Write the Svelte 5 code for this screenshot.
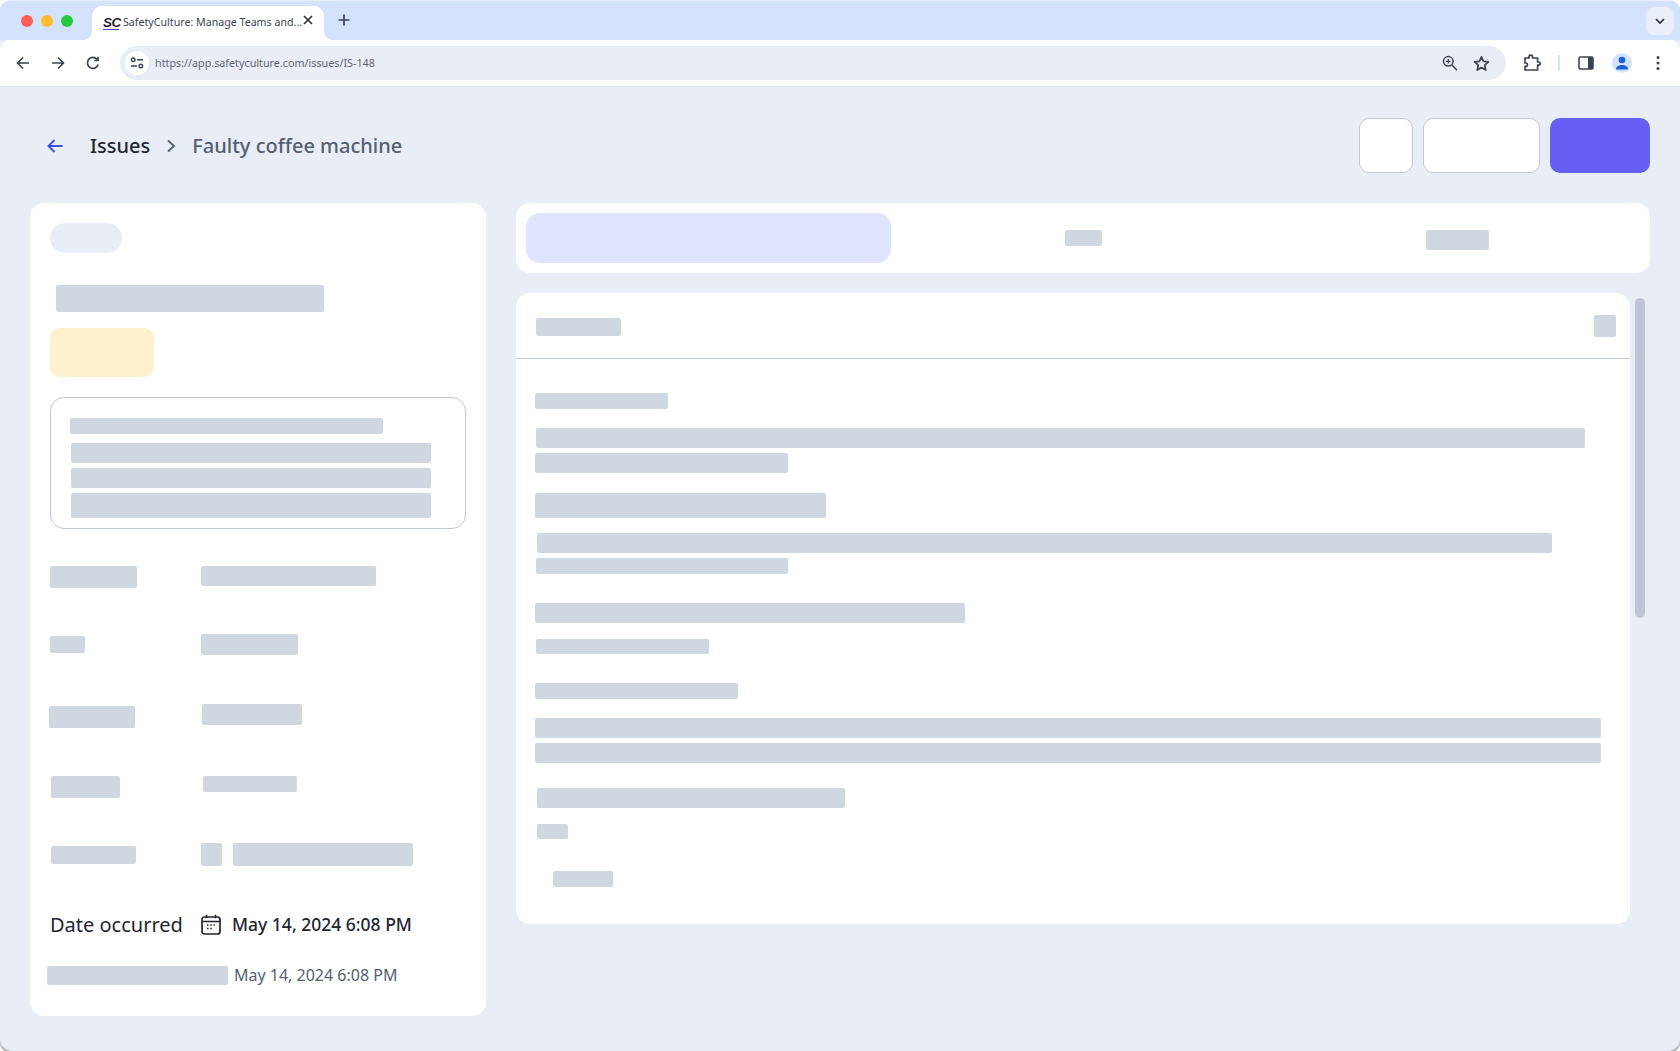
<script>
  // skeleton placeholders: x = left offset, w/h = size, gap = space above
  const boxBars = [
    { x: 19, w: 313, h: 16, gap: 0 },
    { x: 20, w: 360, h: 20, gap: 9 },
    { x: 20, w: 360, h: 20, gap: 5 },
    { x: 20, w: 360, h: 25, gap: 5 }
  ];

  // label and value bars of the five detail rows; the value column starts near x=151
  const fields = [
    { lx: 0, lw: 87, lh: 22, ltop: 3, rx: 151, rw: 175, rh: 20, rtop: 3 },
    { lx: 0, lw: 35, lh: 17, ltop: 3, rx: 151, rw: 97, rh: 21, rtop: 1 },
    { lx: -1, lw: 86, lh: 22, ltop: 3, rx: 152, rw: 100, rh: 21, rtop: 1 },
    { lx: 1, lw: 69, lh: 22, ltop: 3, rx: 153, rw: 94, rh: 16, rtop: 3 },
    { lx: 1, lw: 85, lh: 18, ltop: 3, rx: 151, rw: 21, rh: 23, rtop: 0, extra: 180 }
  ];

  const bodyBars = [
    { x: 19, w: 133, h: 16, gap: 34 },
    { x: 20, w: 1049, h: 20, gap: 19 },
    { x: 19, w: 253, h: 20, gap: 5 },
    { x: 19, w: 291, h: 25, gap: 20 },
    { x: 21, w: 1015, h: 20, gap: 15 },
    { x: 20, w: 252, h: 16, gap: 5 },
    { x: 19, w: 430, h: 20, gap: 29 },
    { x: 20, w: 173, h: 15, gap: 16 },
    { x: 19, w: 203, h: 16, gap: 29 },
    { x: 19, w: 1066, h: 20, gap: 19 },
    { x: 19, w: 1066, h: 20, gap: 5 },
    { x: 21, w: 308, h: 20, gap: 25 },
    { x: 21, w: 31, h: 15, gap: 16 },
    { x: 37, w: 60, h: 16, gap: 32 }
  ];
</script>

{#snippet bars(list)}
  {#each list as b}
    <div class="skel" style="width:{b.w}px;height:{b.h}px;margin:{b.gap}px 0 0 {b.x}px"></div>
  {/each}
{/snippet}

<div class="window">
  <div class="tabstrip">
    <div class="lights">
      <span class="light red"></span>
      <span class="light yellow"></span>
      <span class="light green"></span>
    </div>
    <div class="tab">
      <span class="favicon">SC</span>
      <span class="tab-title">SafetyCulture: Manage Teams and...</span>
      <svg class="tab-close" width="12" height="12" viewBox="0 0 12 12"><path d="M2 2l8 8M10 2l-8 8" stroke="#2a2f3a" stroke-width="1.7" fill="none"/></svg>
    </div>
    <svg class="new-tab" width="14" height="14" viewBox="0 0 14 14"><path d="M7 1.5v11M1.5 7h11" stroke="#3c4350" stroke-width="1.7" fill="none"/></svg>
    <div class="tab-menu">
      <svg width="12" height="12" viewBox="0 0 12 12"><path d="M2 4l4 4 4-4" stroke="#2a2f3a" stroke-width="1.6" fill="none"/></svg>
    </div>
  </div>

  <div class="toolbar">
    <div class="nav">
      <svg width="16" height="16" viewBox="0 0 16 16"><path d="M14 8H2.500M8 2.500L2.500 8 8 13.500" stroke="#3c4350" stroke-width="1.700" fill="none"/></svg>
      <svg width="16" height="16" viewBox="0 0 16 16"><path d="M2 8h11.500M8 2.500L13.500 8 8 13.500" stroke="#3c4350" stroke-width="1.700" fill="none"/></svg>
      <svg width="16" height="16" viewBox="0 0 16 16"><path d="M13.200 9.500A5.500 5.500 0 1 1 12 4.200M13 1.800v3.700H9.300" stroke="#3c4350" stroke-width="1.700" fill="none"/></svg>
    </div>
    <div class="omnibox">
      <span class="site-info">
        <svg width="14" height="12" viewBox="0 0 14 12"><circle cx="3.200" cy="2.800" r="1.800" stroke="#3c4350" stroke-width="1.400" fill="none"/><path d="M7 2.800h6M1 9h6" stroke="#3c4350" stroke-width="1.600"/><circle cx="10.800" cy="9" r="1.800" stroke="#3c4350" stroke-width="1.400" fill="none"/></svg>
      </span>
      <span class="url">https://app.safetyculture.com/issues/IS-148</span>
      <svg class="zoom-icon" width="16" height="16" viewBox="0 0 16 16"><circle cx="6.300" cy="6.300" r="4.800" stroke="#3c4350" stroke-width="1.500" fill="none"/><path d="M10 10l5 5.200" stroke="#3c4350" stroke-width="1.600"/><path d="M6.300 4v4.600M4 6.300h4.600" stroke="#3c4350" stroke-width="1.300"/></svg>
      <svg class="star-icon" width="17" height="17" viewBox="0 0 17 17"><path d="M8.500 1.800l2 4.600 5 .5-3.800 3.300 1.100 4.900-4.300-2.600-4.300 2.600 1.100-4.900L1.500 6.900l5-.5z" stroke="#3c4350" stroke-width="1.700" fill="none" stroke-linejoin="round"/></svg>
    </div>
    <svg class="puzzle" width="18" height="18" viewBox="0 0 18 18"><path d="M2 4h4V3a1.800 1.800 0 0 1 3.600 0v1h5v4h1a1.600 1.600 0 0 1 0 3.200h-1V16H2v-3.600h.8a1.700 1.700 0 0 0 0-3.400H2z" stroke="#3c4350" stroke-width="1.700" fill="none" stroke-linejoin="round"/></svg>
    <span class="sep"></span>
    <svg class="panel-icon" width="16" height="14" viewBox="0 0 16 14"><rect x="1" y="1" width="14" height="12" rx="1.500" stroke="#3c4350" stroke-width="1.600" fill="none"/><rect x="10" y="1" width="5" height="12" fill="#3c4350"/></svg>
    <span class="avatar">
      <svg width="16" height="16" viewBox="0 0 16 16"><circle cx="8" cy="5" r="3.300" fill="#1f5fd6"/><path d="M2 14.500c0-3 2.500-4.500 6-4.500s6 1.500 6 4.500z" fill="#1f5fd6"/></svg>
    </span>
    <svg class="dots" width="4" height="16" viewBox="0 0 4 16"><circle cx="2" cy="2.500" r="1.500" fill="#3c4350"/><circle cx="2" cy="8" r="1.500" fill="#3c4350"/><circle cx="2" cy="13.500" r="1.500" fill="#3c4350"/></svg>
  </div>

  <main class="page">
    <div class="topbar">
      <svg class="back" width="16" height="16" viewBox="0 0 16 16"><path d="M15.500 8H1.500M7.500 2L1.500 8l6 6" stroke="#3b50e0" stroke-width="1.900" fill="none"/></svg>
      <span class="crumb-root">Issues</span>
      <svg class="crumb-sep" width="10" height="14" viewBox="0 0 10 14"><path d="M2 1.500L8 7l-6 5.500" stroke="#545f70" stroke-width="1.800" fill="none"/></svg>
      <span class="crumb-current">Faulty coffee machine</span>
      <div class="actions">
        <div class="btn small"></div>
        <div class="btn medium"></div>
        <div class="btn primary"></div>
      </div>
    </div>

    <div class="columns">
      <aside class="details">
        <div class="pill"></div>
        <div class="skel title"></div>
        <div class="status"></div>
        <div class="desc">
          {@render bars(boxBars)}
        </div>
        <div class="fields">
          {#each fields as f}
            <div class="field">
              <div class="skel" style="width:{f.lw}px;height:{f.lh}px;margin:{f.ltop}px {f.rx - f.lx - f.lw}px 0 {f.lx}px"></div>
              <div class="skel" style="width:{f.rw}px;height:{f.rh}px;margin-top:{f.rtop}px"></div>
              {#if f.extra}
                <div class="skel" style="width:{f.extra}px;height:{f.rh}px;margin-left:11px"></div>
              {/if}
            </div>
          {/each}
        </div>
        <div class="occurred">
          <span class="occurred-label">Date occurred</span>
          <svg class="calendar" width="20" height="21" viewBox="0 0 20 21"><rect x="1" y="3" width="18" height="17" rx="2.500" stroke="#1f2533" stroke-width="1.700" fill="none"/><path d="M1 7.500h18M5.500 .8v3.500M14.500 .8v3.500" stroke="#1f2533" stroke-width="1.700" fill="none"/><path d="M6 11h1.500M9.300 11h1.500M12.600 11h1.500M6 14.500h1.500M9.300 14.500h1.500" stroke="#1f2533" stroke-width="1.500"/></svg>
          <span class="occurred-value">May 14, 2024 6:08 PM</span>
        </div>
        <div class="created">
          <div class="skel created-bar"></div>
          <span class="created-value">May 14, 2024 6:08 PM</span>
        </div>
      </aside>

      <section class="main">
        <div class="tabs">
          <div class="tab-active"></div>
          <div class="skel tab-a"></div>
          <div class="skel tab-b"></div>
        </div>
        <div class="content">
          <div class="panel">
            <div class="panel-head">
              <div class="skel head-title"></div>
              <div class="skel head-icon"></div>
            </div>
            {@render bars(bodyBars)}
          </div>
          <div class="track"><div class="thumb"></div></div>
        </div>
      </section>
    </div>
  </main>
</div>

<style>
  :global(body) {
    background: #fff;
    font-family: "Noto Sans", sans-serif;
  }

  .window {
    height: 1051px;
    display: flex;
    flex-direction: column;
    background: #e8edf6;
    border-radius: 12px;
    overflow: hidden;
    box-sizing: border-box;
    box-shadow: 0 2px 3px rgba(60, 60, 70, 0.6);
  }

  /* browser chrome */
  .tabstrip {
    height: 39px;
    margin-top: 1px;
    flex: none;
    display: flex;
    align-items: flex-end;
    background: #d3e3fd;
  }
  .lights {
    display: flex;
    gap: 8px;
    margin: 0 0 13px 21px;
    width: 71px;
    flex: none;
  }
  .light {
    width: 12px;
    height: 12px;
    border-radius: 50%;
  }
  .red { background: #ff5f57; }
  .yellow { background: #febc2e; }
  .green { background: #28c840; }

  .tab {
    position: relative;
    width: 232px;
    height: 34px;
    box-sizing: border-box;
    padding: 0 10px;
    display: flex;
    align-items: center;
    background: #fff;
    border-radius: 10px 10px 0 0;
    flex: none;
  }
  .tab::before,
  .tab::after {
    content: "";
    position: absolute;
    bottom: 0;
    width: 10px;
    height: 10px;
  }
  .tab::before {
    left: -10px;
    background: radial-gradient(circle at 0 0, #d3e3fd 10px, #fff 10.5px);
  }
  .tab::after {
    right: -10px;
    background: radial-gradient(circle at 100% 0, #d3e3fd 10px, #fff 10.5px);
  }
  .favicon {
    width: 16px;
    margin: 0 4px 0 1px;
    flex: none;
    font: italic 800 13.5px/13px "Liberation Sans", sans-serif;
    letter-spacing: -0.5px;
    color: #1f2533;
    border-bottom: 1px solid #3b50e0;
  }
  .tab-title {
    flex: 1;
    font-size: 10.65px;
    color: #3c4350;
    white-space: nowrap;
    margin-top: -3px;
  }
  .tab-close {
    margin: -7px 1px 0 0;
    flex: none;
  }
  .new-tab {
    margin: 0 0 13px 13px;
    flex: none;
  }
  .tab-menu {
    margin: 0 6px 5px auto;
    width: 28px;
    height: 28px;
    border-radius: 8px;
    background: #e9eef8;
    display: flex;
    align-items: center;
    justify-content: center;
  }

  .toolbar {
    height: 47px;
    flex: none;
    display: flex;
    align-items: center;
    background: #fff;
    border-radius: 10px 10px 0 0;
    box-sizing: border-box;
    border-bottom: 1px solid #dfe1e8;
  }
  .nav {
    display: flex;
    gap: 19px;
    margin-left: 15px;
    width: 105px;
    flex: none;
  }
  .omnibox {
    width: 1386px;
    height: 34px;
    flex: none;
    display: flex;
    align-items: center;
    background: #e9edf6;
    border-radius: 17px;
    box-sizing: border-box;
    padding: 0 16px 0 5px;
  }
  .site-info {
    width: 24px;
    height: 24px;
    border-radius: 50%;
    background: #fff;
    display: flex;
    align-items: center;
    justify-content: center;
    flex: none;
  }
  .url {
    flex: 1;
    margin-left: 6px;
    font-size: 10.75px;
    color: #5d6470;
  }
  .star-icon { margin-left: 15px; }
  .puzzle { margin-left: 17px; flex: none; }
  .sep {
    width: 2px;
    height: 16px;
    background: #d3e3fd;
    margin-left: 17px;
    flex: none;
  }
  .panel-icon { margin-left: 18px; flex: none; }
  .avatar {
    width: 20px;
    height: 20px;
    border-radius: 50%;
    background: #d3e3fd;
    display: flex;
    align-items: center;
    justify-content: center;
    margin-left: 18px;
    overflow: hidden;
    flex: none;
  }
  .dots { margin-left: 24px; flex: none; }

  /* page */
  .page {
    flex: 1;
    padding: 31px 30px 0;
  }
  .topbar {
    height: 55px;
    display: flex;
    align-items: center;
  }
  .back {
    margin-left: 17px;
    flex: none;
  }
  .crumb-root {
    margin-left: 27px;
    font-size: 20px;
    font-weight: 500;
    color: #1f2533;
  }
  .crumb-sep {
    margin-left: 16px;
  }
  .crumb-current {
    margin-left: 16px;
    font-size: 20px;
    font-weight: 500;
    color: #545f70;
  }
  .actions {
    margin-left: auto;
    display: flex;
    gap: 10px;
  }
  .btn {
    height: 55px;
    box-sizing: border-box;
    border: 1px solid #c3c8d6;
    border-radius: 10px;
    background: #fff;
  }
  .small { width: 54px; }
  .medium { width: 117px; }
  .primary {
    width: 100px;
    border: 0;
    background: #675ff3;
  }

  .columns {
    margin-top: 30px;
    display: flex;
    gap: 30px;
    align-items: flex-start;
  }

  .skel {
    background: #d0d7e1;
    border-radius: 2px;
    flex: none;
  }

  /* left card */
  .details {
    width: 456px;
    height: 813px;
    flex: none;
    box-sizing: border-box;
    padding: 20px;
    background: #fff;
    border-radius: 14px;
  }
  .pill {
    width: 72px;
    height: 30px;
    border-radius: 15px;
    background: #e8edf6;
  }
  .title {
    width: 268px;
    height: 27px;
    margin: 32px 0 0 6px;
  }
  .status {
    width: 104px;
    height: 49px;
    margin-top: 16px;
    border-radius: 10px;
    background: #fef1cd;
  }
  .desc {
    height: 132px;
    margin-top: 20px;
    box-sizing: border-box;
    padding-top: 20px;
    border: 1px solid #c3c8d6;
    border-radius: 14px;
  }
  .fields {
    margin-top: 34px;
  }
  .field {
    display: flex;
    align-items: flex-start;
    height: 70px;
  }
  .occurred {
    display: flex;
    align-items: center;
    height: 22px;
  }
  .occurred-label {
    width: 151px;
    font-size: 20px;
    color: #1f2533;
    flex: none;
  }
  .calendar { flex: none; }
  .occurred-value {
    margin-left: 11px;
    font-size: 17.5px;
    font-weight: 500;
    color: #1f2533;
  }
  .created {
    display: flex;
    align-items: center;
    margin-top: 31px;
    height: 19px;
  }
  .created-bar {
    width: 181px;
    height: 19px;
    margin-left: -3px;
  }
  .created-value {
    margin: -2px 0 0 6px;
    font-size: 16px;
    color: #545f70;
  }

  /* right column */
  .main {
    width: 1134px;
    flex: none;
  }
  .tabs {
    height: 70px;
    box-sizing: border-box;
    padding: 10px;
    display: flex;
    align-items: flex-start;
    background: #fff;
    border-radius: 14px;
  }
  .tab-active {
    width: 365px;
    height: 50px;
    flex: none;
    border-radius: 14px;
    background: #e0e4ff;
  }
  .tab-a {
    width: 37px;
    height: 16px;
    margin: 17px 0 0 174px;
  }
  .tab-b {
    width: 63px;
    height: 20px;
    margin: 17px 0 0 324px;
  }
  .content {
    margin-top: 20px;
    display: flex;
  }
  .panel {
    width: 1114px;
    height: 631px;
    flex: none;
    background: #fff;
    border-radius: 14px;
  }
  .panel-head {
    height: 66px;
    box-sizing: border-box;
    border-bottom: 1px solid #c3c8d6;
    display: flex;
    justify-content: space-between;
    align-items: flex-start;
    padding: 22px 14px 0 20px;
  }
  .head-title {
    width: 85px;
    height: 18px;
    margin-top: 3px;
  }
  .head-icon {
    width: 22px;
    height: 22px;
  }
  .track {
    width: 20px;
    padding: 5px;
    box-sizing: border-box;
  }
  .thumb {
    width: 10px;
    height: 320px;
    border-radius: 5px;
    background: #c0c5d6;
  }
</style>
